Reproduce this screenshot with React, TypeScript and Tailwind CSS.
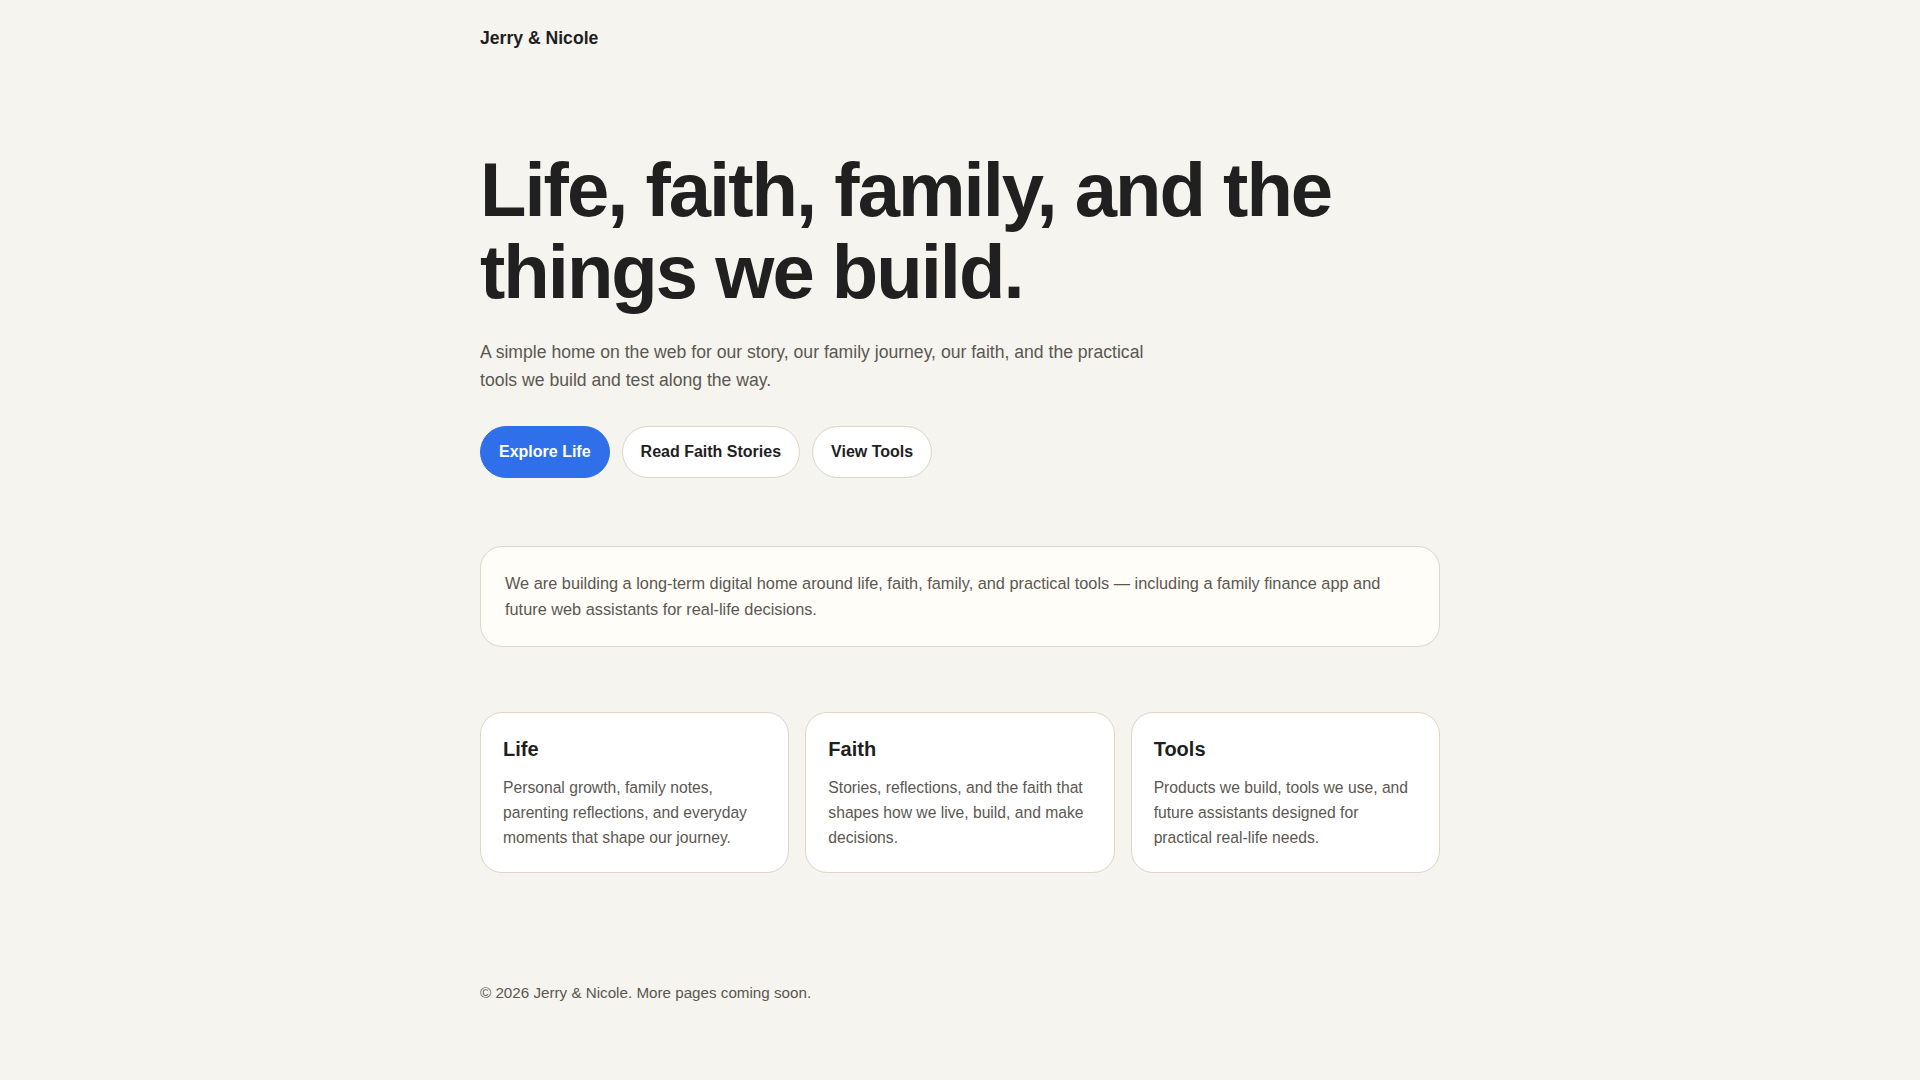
export default function App() {
  const cards = [
    {
      title: 'Life',
      text: 'Personal growth, family notes, parenting reflections, and everyday moments that shape our journey.',
    },
    {
      title: 'Faith',
      text: 'Stories, reflections, and the faith that shapes how we live, build, and make decisions.',
    },
    {
      title: 'Tools',
      text: 'Products we build, tools we use, and future assistants designed for practical real-life needs.',
    },
  ];

  return (
    <div className="min-h-screen bg-[#f5f4ef] font-['Liberation_Sans',Arial,sans-serif] text-[#1f1f1f]">
      <div className="mx-auto w-[960px]">
        {/* header */}
        <header className="pt-6">
          <a href="#" className="text-[17.6px] leading-7 font-bold text-[#1f1f1f]">
            Jerry &amp; Nicole
          </a>
        </header>

        <main className="pt-[97px]">
          {/* hero */}
          <section>
            <h1 className="text-[76px] leading-[82px] font-bold tracking-[-0.026em] text-[#202020]">
              Life, faith, family, and the
              <br />
              things we build.
            </h1>
            <p className="mt-[25px] max-w-[680px] text-[17.6px] leading-[1.6] text-[#5c5751]">
              A simple home on the web for our story, our family journey, our faith, and the practical tools we build and
              test along the way.
            </p>
            <div className="mt-8 flex gap-3">
              <a
                href="#"
                className="flex h-[52px] items-center rounded-full border border-[#2f6fea] bg-[#2f6fea] px-[18px] text-base font-bold text-white"
              >
                Explore Life
              </a>
              <a
                href="#"
                className="flex h-[52px] items-center rounded-full border border-[#ddd6c9] bg-white px-[18px] text-base font-bold text-[#1f1f1f]"
              >
                Read Faith Stories
              </a>
              <a
                href="#"
                className="flex h-[52px] items-center rounded-full border border-[#ddd6c9] bg-white px-[18px] text-base font-bold text-[#1f1f1f]"
              >
                View Tools
              </a>
            </div>
          </section>

          {/* note */}
          <section className="mt-[68px] rounded-[22px] border border-[#ddd6c9] bg-[#fefdf8] p-6">
            <p className="text-[16.32px] leading-[1.55] text-[#5c5751]">
              We are building a long-term digital home around life, faith, family, and practical tools — including a
              family finance app and future web assistants for real-life decisions.
            </p>
          </section>

          {/* cards */}
          <section className="mt-[65px] grid grid-cols-3 gap-4">
            {cards.map((c) => (
              <div key={c.title} className="rounded-[22px] border border-[#ddd6c9] bg-white p-[22px]">
                <h2 className="text-xl leading-7 font-bold text-[#1f1f1f]">{c.title}</h2>
                <p className="mt-3 text-[15.68px] leading-[25px] text-[#5c5751]">{c.text}</p>
              </div>
            ))}
          </section>
        </main>

        <footer className="mt-[108px] pb-16">
          <p className="text-[15.2px] leading-[1.6] text-[#5c5751]">© 2026 Jerry &amp; Nicole. More pages coming soon.</p>
        </footer>
      </div>
    </div>
  );
}
